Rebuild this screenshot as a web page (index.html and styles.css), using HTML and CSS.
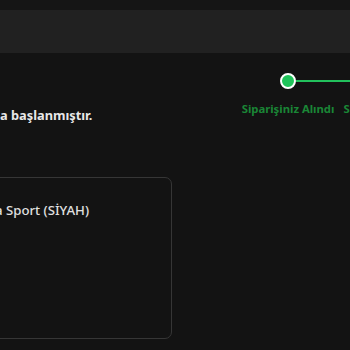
FILE: index.html
```html
<!DOCTYPE html>
<html lang="tr">
<head>
<meta charset="utf-8">
<link rel="stylesheet" href="styles.css">
</head>
<body>
<div class="topbar"></div>
<div class="navbar"></div>
<main class="content">
  <section class="info">
    <p class="status">a başlanmıştır.</p>
    <div class="card">
      <p class="product">a Sport (SİYAH)</p>
    </div>
  </section>
  <section class="stepper">
    <div class="step step-first">
      <div class="track"><span class="line line-off"></span><span class="dot"></span><span class="line"></span></div>
      <span class="label">Siparişiniz Alındı</span>
    </div>
    <div class="step">
      <div class="track"><span class="line"></span><span class="dot dot-next"></span><span class="line"></span></div>
      <span class="label">Siparişiniz Hazırlanıyor</span>
    </div>
  </section>
</main>
</body>
</html>
```
FILE: styles.css
```css
html, body {
  margin: 0;
  padding: 0;
  background: #131313;
  overflow: hidden;
  width: 350px;
  height: 350px;
}
body {
  font-family: "Noto Sans", "Open Sans", sans-serif;
  color: #e6e6e6;
}
.topbar {
  height: 10px;
  background: #151515;
}
.navbar {
  height: 43px;
  background: #212121;
}
.content {
  display: flex;
  align-items: flex-start;
}
.info {
  display: flex;
  flex-direction: column;
  flex: none;
  width: 200px;
}
.status {
  margin: 53px 0 0 0;
  font-size: 12.8px;
  font-weight: 700;
  line-height: 18px;
  color: #e8e8e8;
}
.card {
  margin: 53px 0 0 -20px;
  width: 192px;
  height: 162px;
  border: 1px solid #363636;
  border-radius: 7px;
  box-sizing: border-box;
}
.product {
  margin: 23px 0 0 14px;
  font-size: 13.2px;
  font-weight: 500;
  line-height: 18px;
  color: #e0e0e0;
}
.stepper {
  display: flex;
  margin: 20px 0 0 28px;
  flex: none;
}
.step {
  width: 120px;
  display: flex;
  flex-direction: column;
  align-items: center;
  flex: none;
}
.track {
  display: flex;
  align-items: center;
  width: 100%;
  height: 16px;
}
.line {
  flex: 1;
  height: 2px;
  background: #22c15c;
}
.line-off {
  background: transparent;
}
.dot {
  width: 16px;
  height: 16px;
  box-sizing: border-box;
  border: 2px solid #ffffff;
  border-radius: 50%;
  background: #1fc45a;
  flex: none;
}
.label {
  margin-top: 13px;
  font-size: 11.3px;
  font-weight: 700;
  line-height: 14px;
  color: #1a8636;
  white-space: nowrap;
}
```
